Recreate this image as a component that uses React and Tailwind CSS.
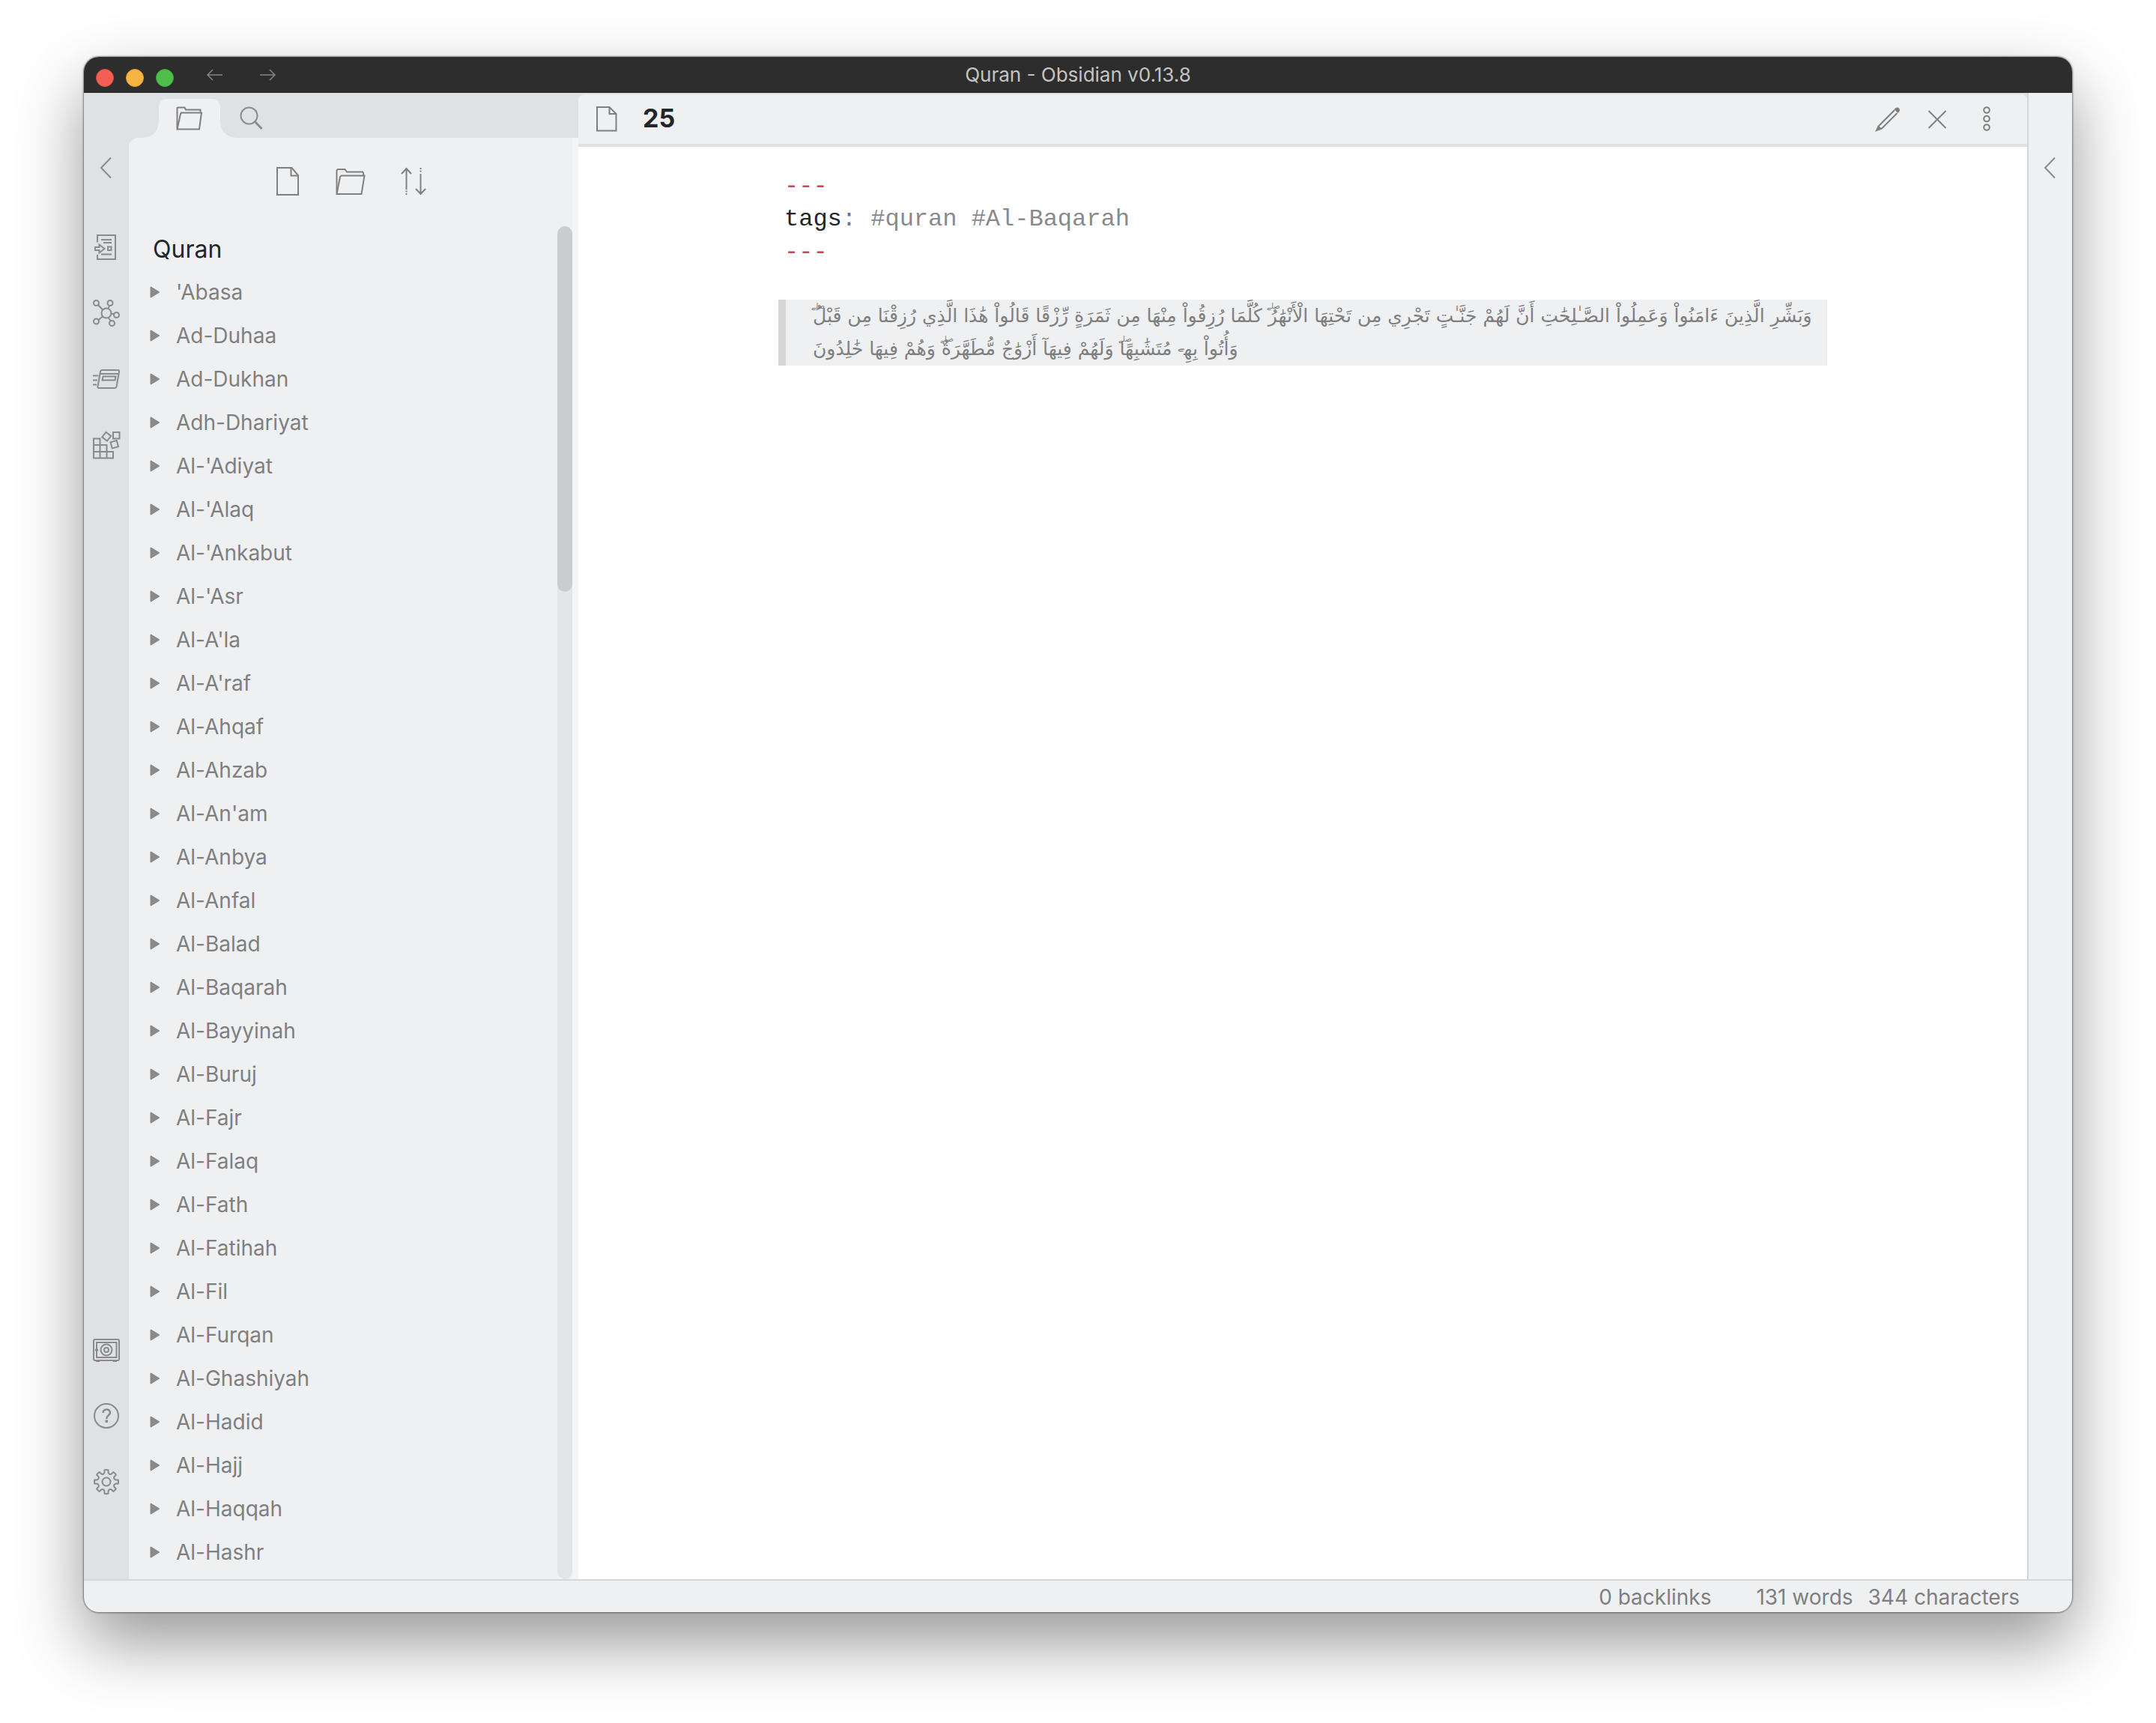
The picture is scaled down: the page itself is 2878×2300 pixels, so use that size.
import React from "react";

const folders = [
  "'Abasa", "Ad-Duhaa", "Ad-Dukhan", "Adh-Dhariyat", "Al-'Adiyat", "Al-'Alaq",
  "Al-'Ankabut", "Al-'Asr", "Al-A'la", "Al-A'raf", "Al-Ahqaf", "Al-Ahzab",
  "Al-An'am", "Al-Anbya", "Al-Anfal", "Al-Balad", "Al-Baqarah", "Al-Bayyinah",
  "Al-Buruj", "Al-Fajr", "Al-Falaq", "Al-Fath", "Al-Fatihah", "Al-Fil",
  "Al-Furqan", "Al-Ghashiyah", "Al-Hadid", "Al-Hajj", "Al-Haqqah", "Al-Hashr",
];

const verse = [
  "وَبَشِّرِ ٱلَّذِينَ ءَامَنُواْ وَعَمِلُواْ ٱلصَّـٰلِحَٰتِ أَنَّ لَهُمۡ جَنَّـٰتٖ تَجۡرِي مِن تَحۡتِهَا ٱلۡأَنۡهَٰرُۖ كُلَّمَا رُزِقُواْ مِنۡهَا مِن ثَمَرَةٖ رِّزۡقٗا قَالُواْ هَٰذَا ٱلَّذِي رُزِقۡنَا مِن قَبۡلُۖ",
  "وَأُتُواْ بِهِۦ مُتَشَٰبِهٗاۖ وَلَهُمۡ فِيهَآ أَزۡوَٰجٞ مُّطَهَّرَةٞۖ وَهُمۡ فِيهَا خَٰلِدُونَ",
];

// Common-font equivalents of Quranic letter forms and vowel marks.
const plainForms = {
  "\u0671": "\u0627",
  "\u06E1": "\u0652",
  "\u0656": "\u064D",
  "\u0657": "\u064B",
  "\u065E": "\u064C",
};

function VerseLine({ text }) {
  const plain = text.replace(/[\u0671\u06E1\u0656\u0657\u065E]/g, (c) => plainForms[c]);
  return plain.split(/([\u06D6\u06E6])/).map((part, i) => {
    if (part === "\u06D6") {
      return (
        <span key={i} className="relative inline-block w-0">
          <span className="absolute -right-4 bottom-4 text-[10px]/[10px]">صلے</span>
        </span>
      );
    }
    if (part === "\u06E6") {
      return <sup key={i} className="text-[14px]/[14px]">ے</sup>;
    }
    return part;
  });
}

function Icon({ children, width = 2 }) {
  return (
    <svg viewBox="0 0 36 36" className="size-9 overflow-visible" fill="none" stroke="currentColor" strokeWidth={width} aria-hidden="true">
      {children}
    </svg>
  );
}

function IconButton({ label, children, className = "" }) {
  return (
    <button type="button" aria-label={label} className={"size-9 shrink-0 " + className}>
      {children}
    </button>
  );
}

const ChevronLeft = () => (
  <Icon><path d="M24 4.500L11 18L24 31.500" /></Icon>
);

const FolderIcon = () => (
  <Icon>
    <path d="M-0.500 33.500V3.500L1 2H10.500L13 5.500H34L35 7V10.500" />
    <path d="M-0.500 35L4 12L5.500 10.500H36.500L32.500 35Z" />
  </Icon>
);

const TabFolderIcon = () => (
  <Icon>
    <path d="M1.500 31V4L2.500 3.500H11.500L13 6.500H32.500V9.500" />
    <path d="M1.500 32.500L6 12L7 10.500H34L31 32.500Z" />
  </Icon>
);

const SearchIcon = () => (
  <Icon>
    <circle cx="14.500" cy="14.500" r="11" />
    <path d="M22 22L31.500 32" strokeWidth="3" />
  </Icon>
);

const NewNoteIcon = () => (
  <Icon>
    <path d="M4 0H23.500L32 10V36H4Z" />
    <path d="M22.500 0V10.500H32" />
  </Icon>
);

const SortIcon = () => (
  <Icon>
    <path d="M8.500 1V29M2 8L8.500 1L15 8M27.500 35V8M21 28L27.500 35L34 28" />
    <path d="M8.500 30.500V36M27.500 0V6" strokeDasharray="2 1.500" />
  </Icon>
);

const SwitcherIcon = () => (
  <Icon>
    <path d="M6 11.500V2H30V34H6V28" />
    <path d="M11 8H25M14 12H25M11 27.500H25" />
    <rect x="20" y="17.500" width="4.500" height="4.500" />
    <path d="M3 18H8.500V14.500L15.500 20L8.500 25.500V22H3Z" />
  </Icon>
);

const GraphIcon = () => (
  <Icon>
    <circle cx="18" cy="18" r="6.500" />
    <circle cx="4.500" cy="4.500" r="3.500" />
    <circle cx="23" cy="4.500" r="3.500" />
    <circle cx="31.500" cy="20.500" r="3.500" />
    <circle cx="25.500" cy="31.500" r="3.500" />
    <circle cx="4.500" cy="29" r="3.500" />
    <path d="M7 7L13 13.500M22 8L20.500 12M24.500 19H28M20.500 24L24 28.500M7.500 27L13 22.500" />
  </Icon>
);

const CardsIcon = () => (
  <Icon>
    <path d="M12.500 6H33.500Q35.500 6 35 8.500L31.500 28Q31 30 29 30H8Q6 30 6.500 28L10 8Q10.500 6 12.500 6Z" />
    <path d="M10 11H34.500M13.500 14.500H30.500L29.500 19.500H12.500ZM0 13.500H7.500M0 19.500H6M0 25.500H5" />
  </Icon>
);

const BlocksIcon = () => (
  <Icon>
    <path d="M1 9.500H9.500V35.500H1ZM1 18H18.500V35.500M1 27H27V35.500H1" />
    <rect x="27" y="1" width="8.500" height="8.500" />
    <rect x="14" y="2.500" width="8.500" height="8.500" transform="rotate(38 18.250 6.750)" />
    <rect x="24.500" y="13" width="8.500" height="8.500" transform="rotate(-16 28.750 17.250)" />
  </Icon>
);

const VaultIcon = () => (
  <Icon>
    <rect x="1" y="4" width="34" height="28" rx="2" />
    <rect x="5" y="8" width="26.500" height="20" />
    <circle cx="18" cy="18" r="7.500" />
    <circle cx="18" cy="18" r="3" />
    <path d="M5 16.500V19.500" strokeWidth="4" />
    <path d="M4 33H9M27 33H32" />
  </Icon>
);

const HelpIcon = () => (
  <Icon>
    <circle cx="18" cy="18" r="16" />
    <path d="M13.500 14C13.500 8 23 8 23 13.500C23 17.500 18.250 17 18.250 22" strokeWidth="2.500" />
    <path d="M18.250 23.500V27" strokeWidth="3.500" />
  </Icon>
);

// Eight-toothed cog outline, built one tooth at a time.
const cogPath = (() => {
  const at = (r, deg) => {
    const a = (deg * Math.PI) / 180;
    return (18 + r * Math.cos(a)).toFixed(2) + " " + (18 + r * Math.sin(a)).toFixed(2);
  };
  let d = "";
  for (let i = 0; i < 8; i++) {
    const c = i * 45 - 90;
    d += (i ? "L" : "M") + at(12.5, c - 12) + "L" + at(16, c - 9) + "A16 16 0 0 1 " + at(16, c + 9) + "L" + at(12.5, c + 12);
    d += "Q" + at(10, c + 22.5) + " " + at(12.5, c + 33);
  }
  return d + "Z";
})();

const SettingsIcon = () => (
  <Icon>
    <path d={cogPath} strokeLinejoin="round" />
    <circle cx="18" cy="18" r="5.500" />
  </Icon>
);

const PencilIcon = () => (
  <Icon>
    <path d="M6 27L27 6M10 30.500L30.500 10M6 27L3 33L10 30.500" />
    <path d="M2.500 33.500L5 26.500L10.500 31ZM26.500 5Q30 1 33 3.500Q35.500 6.500 31.500 10Z" fill="currentColor" stroke="none" />
  </Icon>
);

const CloseIcon = () => (
  <Icon><path d="M6.500 7L29.500 30M29.500 7L6.500 30" /></Icon>
);

const MoreIcon = () => (
  <Icon>
    <circle cx="18" cy="6" r="3.800" />
    <circle cx="18" cy="17.500" r="3.800" />
    <circle cx="18" cy="29" r="3.800" />
  </Icon>
);

const FileIcon = () => (
  <Icon>
    <path d="M5 2H21.500L30.500 11V33.500H5Z" />
    <path d="M21.500 2V11H30.500" />
  </Icon>
);

function TitleBar() {
  return (
    <header className="grid h-12 shrink-0 grid-cols-3 items-center bg-[#2d2d2d] text-[#c4c4c4]">
      <div className="flex items-center pl-4">
        <div className="flex gap-4 pt-2">
          <button type="button" aria-label="Close window" className="size-6 rounded-full border border-[#dc4a40] bg-[#f35f55]" />
          <button type="button" aria-label="Minimize window" className="size-6 rounded-full border border-[#dea035] bg-[#f8b443]" />
          <button type="button" aria-label="Zoom window" className="size-6 rounded-full border border-[#3da83b] bg-[#4fbe4b]" />
        </div>
        <div className="flex gap-12 pl-11 text-[#858585]">
          <button type="button" aria-label="Navigate back">
            <svg viewBox="0 0 22 16" className="h-4 w-[22px]" fill="none" stroke="currentColor" strokeWidth="1.500" aria-hidden="true">
              <path d="M1 8H21M8 1L1 8L8 15" />
            </svg>
          </button>
          <button type="button" aria-label="Navigate forward">
            <svg viewBox="0 0 22 16" className="h-4 w-[22px]" fill="none" stroke="currentColor" strokeWidth="1.500" aria-hidden="true">
              <path d="M1 8H21M14 1L21 8L14 15" />
            </svg>
          </button>
        </div>
      </div>
      <h1 className="text-center text-[26px]/[44px]">Quran - Obsidian v0.13.8</h1>
    </header>
  );
}

function Ribbon() {
  return (
    <nav aria-label="Ribbon" className="flex w-[60px] shrink-0 flex-col items-center bg-[#dfe1e5] pt-[82px] pb-28 text-[#8a8a8a]">
      <IconButton label="Collapse sidebar"><ChevronLeft /></IconButton>
      <div className="mt-[70px] flex flex-col gap-[52px]">
        <IconButton label="Open quick switcher"><SwitcherIcon /></IconButton>
        <IconButton label="Open graph view"><GraphIcon /></IconButton>
        <IconButton label="Review flashcards"><CardsIcon /></IconButton>
        <IconButton label="Plugins"><BlocksIcon /></IconButton>
      </div>
      <div className="mt-auto flex flex-col gap-[52px]">
        <IconButton label="Open another vault"><VaultIcon /></IconButton>
        <IconButton label="Help"><HelpIcon /></IconButton>
        <IconButton label="Settings"><SettingsIcon /></IconButton>
      </div>
    </nav>
  );
}

function Sidebar() {
  return (
    <aside className="flex w-[600px] shrink-0 flex-col bg-[#dfe1e5]">
      <div className="flex h-[60px] shrink-0 items-end pl-10 text-[#7f7f7f]">
        <div className="relative flex h-[52px] w-[82px] justify-center rounded-t-[10px] bg-[#eff0f2] pt-2 before:absolute before:bottom-0 before:-left-5 before:size-5 before:bg-[radial-gradient(circle_at_0_0,transparent_19px,#eff0f2_20px)] after:absolute after:-right-5 after:bottom-0 after:size-5 after:bg-[radial-gradient(circle_at_100%_0,transparent_19px,#eff0f2_20px)]">
          <IconButton label="File explorer"><TabFolderIcon /></IconButton>
        </div>
        <IconButton label="Search" className="mb-2 ml-6 text-[#8c8c8c]"><SearchIcon /></IconButton>
      </div>
      <div className="flex min-h-0 flex-1 rounded-tl-xl bg-[#eff0f2]">
        <div className="flex min-w-0 flex-1 flex-col">
          <div className="flex h-[118px] shrink-0 items-center justify-center gap-12 pb-0.5 text-[#7f7f7f]">
            <IconButton label="New note"><NewNoteIcon /></IconButton>
            <IconButton label="New folder"><FolderIcon /></IconButton>
            <IconButton label="Change sort order"><SortIcon /></IconButton>
          </div>
          <div className="flex min-h-0 flex-1">
            <div className="min-w-0 flex-1 overflow-hidden">
              <h2 className="h-[59px] pl-8 text-[32px]/[62px] text-[#222529]">Quran</h2>
              <ul className="text-[28px] text-[#7f7f7f]">
                {folders.map((name) => (
                  <li key={name}>
                    <button type="button" className="flex h-[58px] w-full items-center gap-[22px] pl-7 text-left">
                      <svg viewBox="0 0 13 16" className="h-4 w-[13px] shrink-0" fill="#8a8a8a" stroke="#8a8a8a" strokeWidth="2" strokeLinejoin="round" aria-hidden="true">
                        <path d="M1.500 1.500V14.500L12 8Z" />
                      </svg>
                      {name}
                    </button>
                  </li>
                ))}
              </ul>
            </div>
            <div aria-hidden="true" className="w-5 rounded-full bg-[#e4e5e7]">
              <div className="h-[27%] rounded-full bg-[#cbccce]" />
            </div>
          </div>
        </div>
        <div className="w-2 bg-[#f4f5f7]" />
      </div>
    </aside>
  );
}

function Editor() {
  return (
    <main className="flex min-w-0 flex-1 flex-col bg-white">
      <div className="shrink-0 bg-[#dfe1e5] pt-0.5">
        <div className="flex h-[70px] items-center rounded-t-lg border-b-4 border-[#dfe1e5] bg-[#eff0f2] pr-9 pl-5 text-[#7f7f7f]">
          <IconButton label="Drag note"><FileIcon /></IconButton>
          <h2 className="ml-[30px] flex-1 pb-0.5 text-[34px]/[60px] font-bold text-[#222529]">25</h2>
          <div className="flex gap-[30px]">
            <IconButton label="Edit"><PencilIcon /></IconButton>
            <IconButton label="Close"><CloseIcon /></IconButton>
            <IconButton label="More options"><MoreIcon /></IconButton>
          </div>
        </div>
      </div>
      <article className="mx-auto w-full max-w-[1400px] pt-[31px]">
        <pre className="pl-2 font-['Liberation_Mono',monospace] text-[32px]/[44px] text-[#8a8a8a]">
          <span className="text-[#d04255]">---</span>{"\n"}
          <span className="text-[#222529]">tags</span><span className="text-[#5f7a94]">:</span>{" #quran #Al-Baqarah\n"}
          <span className="text-[#d04255]">---</span>
        </pre>
        <blockquote lang="ar" className="mt-[41px] border-l-[10px] border-[#d6d6d6] bg-[#eff0f2] pl-9 font-['DejaVu_Sans',sans-serif] text-[25px]/[44px] whitespace-nowrap text-[#7f7f7f]">
          {verse.map((line) => (
            <p key={line} className="h-11"><span dir="rtl"><VerseLine text={line} /></span></p>
          ))}
        </blockquote>
      </article>
    </main>
  );
}

export default function App() {
  return (
    <div className="h-screen bg-white px-28 pt-[76px] pb-[148px] font-['Inter',sans-serif]">
      <div className="flex h-full flex-col overflow-hidden rounded-[20px] bg-[#eff0f2] shadow-[0_0_2px_1px_rgba(0,0,0,0.45),0_40px_90px_rgba(0,0,0,0.41)]">
        <TitleBar />
        <div className="flex min-h-0 flex-1">
          <Ribbon />
          <Sidebar />
          <Editor />
          <div className="flex w-[60px] shrink-0 justify-center border-l-2 border-[#d5d6d8] bg-[#eff0f2] pt-[82px] text-[#8a8a8a]">
            <IconButton label="Expand right sidebar"><ChevronLeft /></IconButton>
          </div>
        </div>
        <footer className="flex h-11 shrink-0 items-center justify-end border-t-2 border-[#d5d6d8] pt-0.5 pr-[70px] text-[28px]/[40px] text-[#7f7f7f]">
          <span className="mr-[60px]">0 backlinks</span>
          <span className="mr-5">131 words</span>
          <span>344 characters</span>
        </footer>
      </div>
    </div>
  );
}
